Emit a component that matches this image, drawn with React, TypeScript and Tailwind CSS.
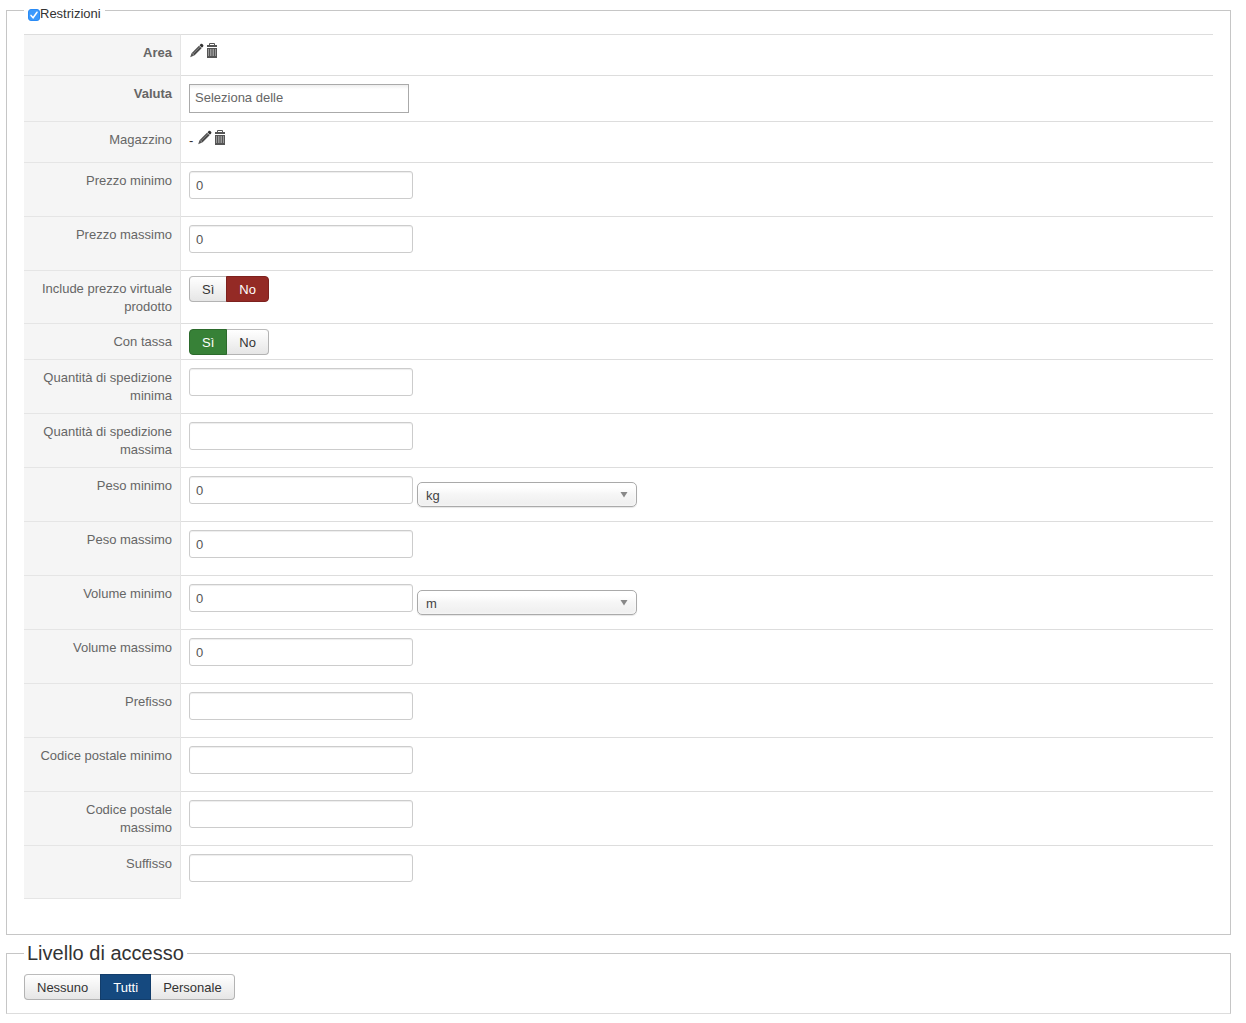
import { useState } from 'react';
import type { ReactNode } from 'react';
import { clsx } from 'clsx';

const BTN = 'h-[26px] px-3 pt-0.5 leading-[18px] border cursor-pointer first:rounded-l last:rounded-r not-first:-ml-px';
const BTN_OFF = 'border-[#b3b3b3] border-t-[#bbb] bg-linear-to-b from-white to-[#e6e6e6] text-[#333]';

const ACTIVE = {
  red: 'z-10 border-[#7d211e] bg-[#942a25] text-white',
  green: 'z-10 border-[#2c6a2c] bg-[#378137] text-white',
  blue: 'z-10 border-[#123d6b] bg-[#15497f] text-white',
};

function PencilIcon() {
  return (
    <svg width="14" height="15" viewBox="0 0 14 15">
      <path d="M0.2 14.2 L1.6 10.1 L4.1 12.6 Z" fill="#555" />
      <path d="M1.8 9.9 L9 2.7 L11.6 5.3 L4.4 12.5 Z" fill="#4a4a4a" />
      <path d="M3.2 10.6 L9.8 4" stroke="#999" strokeWidth="0.8" />
      <path d="M9.5 2.3 L11 0.8 Q11.6 0.4 12.3 1 L13.2 1.9 Q13.7 2.6 13.2 3.2 L11.9 4.7 Z" fill="#333" />
    </svg>
  );
}

function TrashIcon() {
  return (
    <svg width="10" height="15" viewBox="0 0 10 15">
      <path d="M2.5 2 V0.5 H7.5 V2" fill="none" stroke="#555" />
      <path d="M0 2 H10 V4 H0 Z" fill="#555" />
      <path d="M0 5 H10 V15 H0 Z" fill="#555" />
      <path d="M1 6 H2 V13 H1 Z M3 6 H4.5 V13 H3 Z M5.5 6 H7 V13 H5.5 Z M8 6 H9 V13 H8 Z" fill="#999" />
    </svg>
  );
}

function EditActions({ name }: { name: string }) {
  return (
    <span className="flex items-start gap-[3px] pl-px">
      <button type="button" aria-label={`Modifica ${name}`} className="cursor-pointer"><PencilIcon /></button>
      <button type="button" aria-label={`Elimina ${name}`} className="cursor-pointer"><TrashIcon /></button>
    </span>
  );
}

function Toggle({ label, options, initial, colors }: {
  label: string;
  options: string[];
  initial: string;
  colors: (keyof typeof ACTIVE)[];
}) {
  const [value, setValue] = useState(initial);
  return (
    <div role="group" aria-label={label} className="flex">
      {options.map((o, i) => (
        <button
          key={o}
          type="button"
          aria-pressed={value === o}
          onClick={() => setValue(o)}
          className={clsx(BTN, value === o ? ACTIVE[colors[i]] : BTN_OFF)}
        >
          {o}
        </button>
      ))}
    </div>
  );
}

function Row({ label, id, bold, tight, children }: {
  label: string;
  id?: string;
  bold?: boolean;
  tight?: boolean;
  children: ReactNode;
}) {
  return (
    <tr className="group">
      <th
        scope="row"
        className={clsx(
          'w-[157px] px-2 pt-[9px] pb-[7px] align-top text-right leading-[18px] bg-[#f5f5f5] text-[#666]',
          'border-t border-r border-[#e5e5e5] group-first:border-t-[#ddd] group-last:border-b',
          bold ? 'font-bold' : 'font-normal'
        )}
      >
        {id ? <label htmlFor={id}>{label}</label> : label}
      </th>
      <td className={clsx('px-2 align-top border-t border-[#ddd]', tight ? 'pt-[5px] pb-1' : 'py-2')}>
        {children}
      </td>
    </tr>
  );
}

function TextRow({ label, id, value = '', unit }: { label: string; id: string; value?: string; unit?: string }) {
  return (
    <Row label={label} id={id}>
      <div className="flex items-start gap-1 h-[37px]">
        <input
          id={id}
          type="text"
          defaultValue={value}
          className="w-56 h-7 px-1.5 border border-[#ccc] rounded-[3px] bg-white text-[#555] shadow-[inset_0_1px_1px_rgba(0,0,0,0.075)]"
        />
        {unit && (
          <div className="grid items-center mt-1.5">
            <select
              aria-label={`Unità ${label}`}
              className="col-start-1 row-start-1 appearance-none w-[220px] h-[25px] pl-2 pt-0.5 border border-[#aaa] rounded-[5px] text-[#444] bg-linear-to-b from-white from-20% via-[#f6f6f6] via-50% to-[#eee] shadow-[inset_0_0_3px_#fff,0_1px_1px_rgba(0,0,0,0.1)]"
            >
              <option>{unit}</option>
            </select>
            <svg width="8" height="6" viewBox="0 0 8 6" className="col-start-1 row-start-1 justify-self-end mr-[9px] pointer-events-none">
              <path d="M0.5 0 H7.5 L4 5.5 Z" fill="#888" />
            </svg>
          </div>
        )}
      </div>
    </Row>
  );
}

export default function App() {
  const [enabled, setEnabled] = useState(true);

  return (
    <form className="pl-1.5 pr-[15px] pb-2 bg-white text-[13px] leading-[18px] text-[#333] font-['Liberation_Sans',Arial,sans-serif]">
      <fieldset className="border border-[#c6c6c6] px-[17px] pt-[13px] pb-[35px]">
        <legend className="h-[21px] pt-[5px] px-1">
          <label className="flex items-center h-[17px]">
            <span className="grid place-items-center pt-0.5">
              <input
                type="checkbox"
                checked={enabled}
                onChange={e => setEnabled(e.target.checked)}
                className="col-start-1 row-start-1 appearance-none size-3 rounded-[3px] border border-[#2a8bf5] checked:bg-[#3b99fc]"
              />
              {enabled && (
                <svg width="12" height="12" viewBox="0 0 12 12" className="col-start-1 row-start-1 pointer-events-none">
                  <path d="M3 6.4 L5.1 8.7 L9 3.2" fill="none" stroke="#fff" strokeWidth="1.5" strokeLinecap="round" />
                </svg>
              )}
            </span>
            Restrizioni
          </label>
        </legend>

        <table className="w-full border-separate border-spacing-0">
          <tbody>
            <Row label="Area" bold>
              <div className="h-6"><EditActions name="Area" /></div>
            </Row>
            <Row label="Valuta" id="valuta" bold>
              <input
                id="valuta"
                type="text"
                defaultValue="Seleziona delle"
                className="block w-[220px] h-[29px] px-[5px] pb-0.5 border border-[#aaa] text-[#666] bg-white bg-linear-to-b from-[#eee] to-white to-15%"
              />
            </Row>
            <Row label="Magazzino">
              <div className="flex items-start gap-1 h-6">
                <span className="pt-0.5">-</span>
                <EditActions name="Magazzino" />
              </div>
            </Row>
            <TextRow label="Prezzo minimo" id="prezzo-min" value="0" />
            <TextRow label="Prezzo massimo" id="prezzo-max" value="0" />
            <Row label="Include prezzo virtuale prodotto" tight>
              <Toggle label="Include prezzo virtuale prodotto" options={['Sì', 'No']} initial="No" colors={['green', 'red']} />
            </Row>
            <Row label="Con tassa" tight>
              <Toggle label="Con tassa" options={['Sì', 'No']} initial="Sì" colors={['green', 'red']} />
            </Row>
            <TextRow label="Quantità di spedizione minima" id="qta-min" />
            <TextRow label="Quantità di spedizione massima" id="qta-max" />
            <TextRow label="Peso minimo" id="peso-min" value="0" unit="kg" />
            <TextRow label="Peso massimo" id="peso-max" value="0" />
            <TextRow label="Volume minimo" id="volume-min" value="0" unit="m" />
            <TextRow label="Volume massimo" id="volume-max" value="0" />
            <TextRow label="Prefisso" id="prefisso" />
            <TextRow label="Codice postale minimo" id="cap-min" />
            <TextRow label="Codice postale massimo" id="cap-max" />
            <TextRow label="Suffisso" id="suffisso" />
          </tbody>
        </table>
      </fieldset>

      <fieldset className="mt-2 border border-[#c6c6c6] border-b-[#ddd] px-[17px] pt-[11px] pb-[13px]">
        <legend className="px-[3px] text-[20px] leading-5">Livello di accesso</legend>
        <Toggle
          label="Livello di accesso"
          options={['Nessuno', 'Tutti', 'Personale']}
          initial="Tutti"
          colors={['blue', 'blue', 'blue']}
        />
      </fieldset>
    </form>
  );
}
